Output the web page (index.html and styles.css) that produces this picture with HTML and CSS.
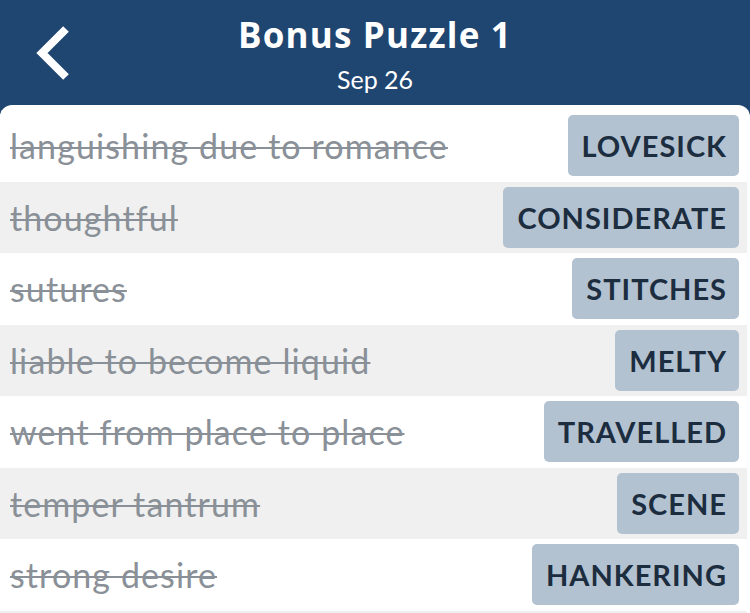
FILE: index.html
```html
<!DOCTYPE html>
<html>
<head>
<meta charset="utf-8">
<link rel="stylesheet" href="styles.css">
</head>
<body>
<header class="topbar">
  <button class="back" aria-label="Back">
    <svg width="48" height="60" viewBox="0 0 48 60"><path d="M38 5 L14 29 L38 53" fill="none" stroke="#fff" stroke-width="8" stroke-linecap="butt" stroke-linejoin="miter"/></svg>
  </button>
  <div class="titles">
    <h1 class="title">Bonus Puzzle 1</h1>
    <div class="date">Sep 26</div>
  </div>
  <div class="spacer"></div>
</header>
<main class="card">
  <div class="row"><span class="clue">languishing due to romance</span><span class="answer">LOVESICK</span></div>
  <div class="row alt"><span class="clue">thoughtful</span><span class="answer">CONSIDERATE</span></div>
  <div class="row"><span class="clue">sutures</span><span class="answer">STITCHES</span></div>
  <div class="row alt"><span class="clue">liable to become liquid</span><span class="answer">MELTY</span></div>
  <div class="row"><span class="clue">went from place to place</span><span class="answer">TRAVELLED</span></div>
  <div class="row alt"><span class="clue">temper tantrum</span><span class="answer">SCENE</span></div>
  <div class="row"><span class="clue">strong desire</span><span class="answer">HANKERING</span></div>
  <div class="row alt"></div>
</main>
</body>
</html>
```

FILE: styles.css
```css
* { box-sizing: border-box; }
html, body { margin: 0; padding: 0; }
body {
  width: 750px;
  height: 613px;
  overflow: hidden;
  background: #1f4571;
  font-family: Lato, "Open Sans", sans-serif;
}
.topbar {
  height: 105px;
  display: grid;
  grid-template-columns: 100px 1fr 100px;
  align-items: start;
  color: #fff;
}
.back {
  background: none;
  border: 0;
  padding: 0;
  margin: 24px 0 0 28px;
  width: 48px;
  height: 60px;
  cursor: pointer;
}
.back svg { display: block; }
.titles {
  display: flex;
  flex-direction: column;
  align-items: center;
  padding-top: 13px;
}
.title {
  margin: 0;
  font-family: "Open Sans", sans-serif;
  font-size: 35px;
  font-weight: 700;
  line-height: 44px;
  letter-spacing: 1.2px;
}
.date {
  font-size: 25px;
  line-height: 28px;
  margin-top: 8px;
}
.card {
  background: #fff;
  border-radius: 12px 12px 0 0;
  padding: 5px 3px 0 0;
  height: 508px;
  overflow: hidden;
}
.row {
  height: 71.5px;
  display: flex;
  align-items: center;
  justify-content: space-between;
  padding: 0 8px 0 10px;
  background: #fff;
}
.row.alt { background: #f0f0f0; }
.clue {
  font-size: 34px;
  letter-spacing: 1.1px;
  color: #8a9097;
  text-decoration: line-through;
  text-decoration-thickness: 2px;
  white-space: nowrap;
}
.answer {
  height: 61px;
  display: flex;
  align-items: center;
  padding: 0 12px 0 14px;
  background: #b3c2d0;
  border-radius: 5px;
  color: #1c2d3f;
  font-size: 29px;
  font-weight: 700;
  letter-spacing: 1px;
}
```
